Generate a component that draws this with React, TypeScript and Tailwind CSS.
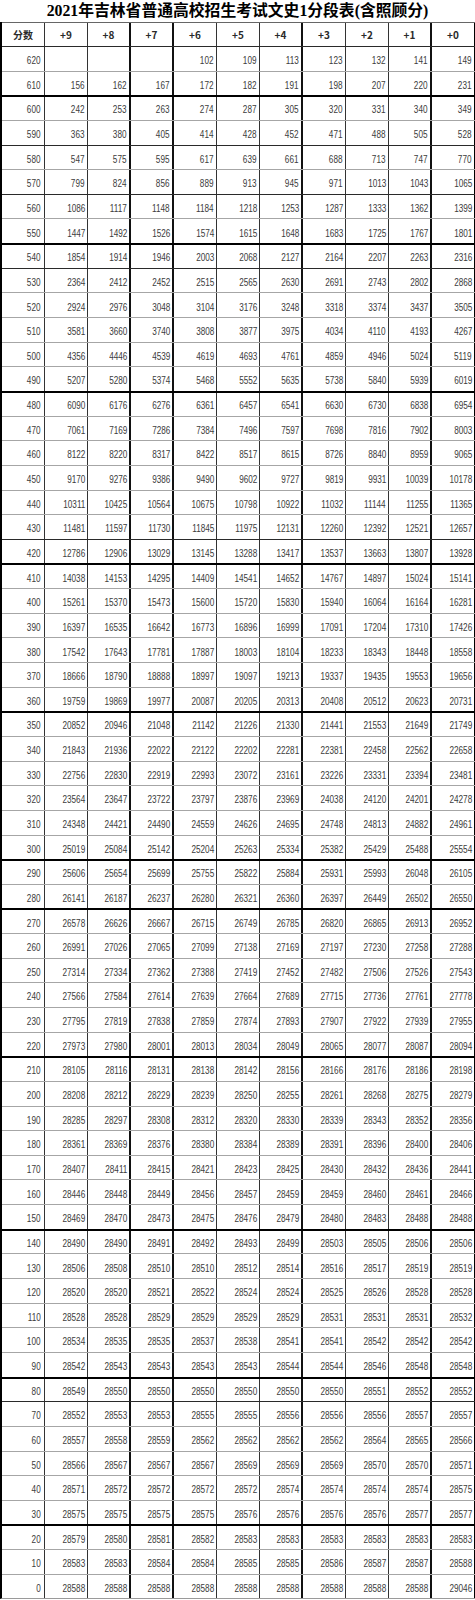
import React from "react";

type Row = [number, (number | null)[]];

const rows: Row[] = [
  [620, [null, null, null, 102, 109, 113, 123, 132, 141, 149]],
  [610, [156, 162, 167, 172, 182, 191, 198, 207, 220, 231]],
  [600, [242, 253, 263, 274, 287, 305, 320, 331, 340, 349]],
  [590, [363, 380, 405, 414, 428, 452, 471, 488, 505, 528]],
  [580, [547, 575, 595, 617, 639, 661, 688, 713, 747, 770]],
  [570, [799, 824, 856, 889, 913, 945, 971, 1013, 1043, 1065]],
  [560, [1086, 1117, 1148, 1184, 1218, 1253, 1287, 1333, 1362, 1399]],
  [550, [1447, 1492, 1526, 1574, 1615, 1648, 1683, 1725, 1767, 1801]],
  [540, [1854, 1914, 1946, 2003, 2068, 2127, 2164, 2207, 2263, 2316]],
  [530, [2364, 2412, 2452, 2515, 2565, 2630, 2691, 2743, 2802, 2868]],
  [520, [2924, 2976, 3048, 3104, 3176, 3248, 3318, 3374, 3437, 3505]],
  [510, [3581, 3660, 3740, 3808, 3877, 3975, 4034, 4110, 4193, 4267]],
  [500, [4356, 4446, 4539, 4619, 4693, 4761, 4859, 4946, 5024, 5119]],
  [490, [5207, 5280, 5374, 5468, 5552, 5635, 5738, 5840, 5939, 6019]],
  [480, [6090, 6176, 6276, 6361, 6457, 6541, 6630, 6730, 6838, 6954]],
  [470, [7061, 7169, 7286, 7384, 7496, 7597, 7698, 7816, 7902, 8003]],
  [460, [8122, 8220, 8317, 8422, 8517, 8615, 8726, 8840, 8959, 9065]],
  [450, [9170, 9276, 9386, 9490, 9602, 9727, 9819, 9931, 10039, 10178]],
  [440, [10311, 10425, 10564, 10675, 10798, 10922, 11032, 11144, 11255, 11365]],
  [430, [11481, 11597, 11730, 11845, 11975, 12131, 12260, 12392, 12521, 12657]],
  [420, [12786, 12906, 13029, 13145, 13288, 13417, 13537, 13663, 13807, 13928]],
  [410, [14038, 14153, 14295, 14409, 14541, 14652, 14767, 14897, 15024, 15141]],
  [400, [15261, 15370, 15473, 15600, 15720, 15830, 15940, 16064, 16164, 16281]],
  [390, [16397, 16535, 16642, 16773, 16896, 16999, 17091, 17204, 17310, 17426]],
  [380, [17542, 17643, 17781, 17887, 18003, 18104, 18233, 18343, 18448, 18558]],
  [370, [18666, 18790, 18888, 18997, 19097, 19213, 19337, 19435, 19553, 19656]],
  [360, [19759, 19869, 19977, 20087, 20205, 20313, 20408, 20512, 20623, 20731]],
  [350, [20852, 20946, 21048, 21142, 21226, 21330, 21441, 21553, 21649, 21749]],
  [340, [21843, 21936, 22022, 22122, 22202, 22281, 22381, 22458, 22562, 22658]],
  [330, [22756, 22830, 22919, 22993, 23072, 23161, 23226, 23331, 23394, 23481]],
  [320, [23564, 23647, 23722, 23797, 23876, 23969, 24038, 24120, 24201, 24278]],
  [310, [24348, 24421, 24490, 24559, 24626, 24695, 24748, 24813, 24882, 24961]],
  [300, [25019, 25084, 25142, 25204, 25263, 25334, 25382, 25429, 25488, 25554]],
  [290, [25606, 25654, 25699, 25755, 25822, 25884, 25931, 25993, 26048, 26105]],
  [280, [26141, 26187, 26237, 26280, 26321, 26360, 26397, 26449, 26502, 26550]],
  [270, [26578, 26626, 26667, 26715, 26749, 26785, 26820, 26865, 26913, 26952]],
  [260, [26991, 27026, 27065, 27099, 27138, 27169, 27197, 27230, 27258, 27288]],
  [250, [27314, 27334, 27362, 27388, 27419, 27452, 27482, 27506, 27526, 27543]],
  [240, [27566, 27584, 27614, 27639, 27664, 27689, 27715, 27736, 27761, 27778]],
  [230, [27795, 27819, 27838, 27859, 27874, 27893, 27907, 27922, 27939, 27955]],
  [220, [27973, 27980, 28001, 28013, 28034, 28049, 28065, 28077, 28087, 28094]],
  [210, [28105, 28116, 28131, 28138, 28142, 28156, 28166, 28176, 28186, 28198]],
  [200, [28208, 28212, 28229, 28239, 28250, 28255, 28261, 28268, 28275, 28279]],
  [190, [28285, 28297, 28308, 28312, 28320, 28330, 28339, 28343, 28352, 28356]],
  [180, [28361, 28369, 28376, 28380, 28384, 28389, 28391, 28396, 28400, 28406]],
  [170, [28407, 28411, 28415, 28421, 28423, 28425, 28430, 28432, 28436, 28441]],
  [160, [28446, 28448, 28449, 28456, 28457, 28459, 28459, 28460, 28461, 28466]],
  [150, [28469, 28470, 28473, 28475, 28476, 28479, 28480, 28483, 28488, 28488]],
  [140, [28490, 28490, 28491, 28492, 28493, 28499, 28503, 28505, 28506, 28506]],
  [130, [28506, 28508, 28510, 28510, 28512, 28514, 28516, 28517, 28519, 28519]],
  [120, [28520, 28520, 28521, 28522, 28524, 28524, 28525, 28526, 28528, 28528]],
  [110, [28528, 28528, 28529, 28529, 28529, 28529, 28531, 28531, 28531, 28532]],
  [100, [28534, 28535, 28535, 28537, 28538, 28541, 28541, 28542, 28542, 28542]],
  [90, [28542, 28543, 28543, 28543, 28543, 28544, 28544, 28546, 28548, 28548]],
  [80, [28549, 28550, 28550, 28550, 28550, 28550, 28550, 28551, 28552, 28552]],
  [70, [28552, 28553, 28553, 28555, 28555, 28556, 28556, 28556, 28557, 28557]],
  [60, [28557, 28558, 28559, 28562, 28562, 28562, 28562, 28564, 28565, 28566]],
  [50, [28566, 28567, 28567, 28567, 28569, 28569, 28569, 28570, 28570, 28571]],
  [40, [28571, 28572, 28572, 28572, 28572, 28574, 28574, 28574, 28574, 28575]],
  [30, [28575, 28575, 28575, 28575, 28576, 28576, 28576, 28576, 28577, 28577]],
  [20, [28579, 28580, 28581, 28582, 28583, 28583, 28583, 28583, 28583, 28583]],
  [10, [28583, 28583, 28584, 28584, 28585, 28585, 28586, 28587, 28587, 28588]],
  [0, [28588, 28588, 28588, 28588, 28588, 28588, 28588, 28588, 28588, 29046]],
];

const headers = ["分数", "+9", "+8", "+7", "+6", "+5", "+4", "+3", "+2", "+1", "+0"];

const thick = new Set([600, 540, 480, 410, 350, 290, 270, 210, 140, 80, 20]);
const dark = new Set([620, 580, 560, 530, 420, 70]);

function rowTop(score: number): string {
  if (thick.has(score)) return "border-t-2 border-t-black";
  if (dark.has(score)) return "border-t border-t-[#2a2a2a]";
  return "border-t border-t-[#a6a6a6]";
}

function colRight(i: number): string {
  if (i === 10) return "border-r border-r-black";
  if (i === 2 || i === 3 || i === 6 || i === 9) return "border-r-2 border-r-[#111]";
  return "border-r border-r-[#333]";
}

const numFont = { fontFamily: "'Liberation Sans', Arial, sans-serif" };

function Num({ v }: { v: number | string }) {
  return (
    <span className="inline-block origin-right scale-x-[0.78] text-[10.5px] leading-none text-[#3c3c3c]" style={numFont}>
      {v}
    </span>
  );
}

export default function App() {
  return (
    <div className="w-[475px] bg-white">
      <div
        className="flex h-[22px] items-center justify-center text-[15.8px] font-bold leading-none text-black"
        style={{ fontFamily: "'Liberation Serif', 'Noto Sans CJK SC', serif" }}
      >
        2021年吉林省普通高校招生考试文史1分段表(含照顾分)
      </div>
      <div className="border-l-2 border-l-black border-b border-b-[#9a9a9a]">
        <div className="grid h-[24px] grid-cols-11 border-t border-t-[#666]">
          {headers.map((h, i) => (
            <div
              key={h}
              className={`flex items-center justify-center text-[10px] font-bold text-[#2a2a2a] ${colRight(i)}`}
              style={{ fontFamily: "'Noto Sans CJK SC', 'Liberation Sans', sans-serif" }}
            >
              {h}
            </div>
          ))}
        </div>
        {rows.map(([score, vals]) => (
          <div key={score} className={`grid h-[24.65px] grid-cols-11 ${rowTop(score)}`}>
            <div className={`flex items-end justify-end pb-[5px] pr-[3px] ${colRight(0)}`}>
              <Num v={score} />
            </div>
            {vals.map((v, i) => (
              <div key={i} className={`flex items-end justify-end pb-[5px] pr-[2px] ${colRight(i + 1)}`}>
                {v !== null ? <Num v={v} /> : null}
              </div>
            ))}
          </div>
        ))}
      </div>
    </div>
  );
}
